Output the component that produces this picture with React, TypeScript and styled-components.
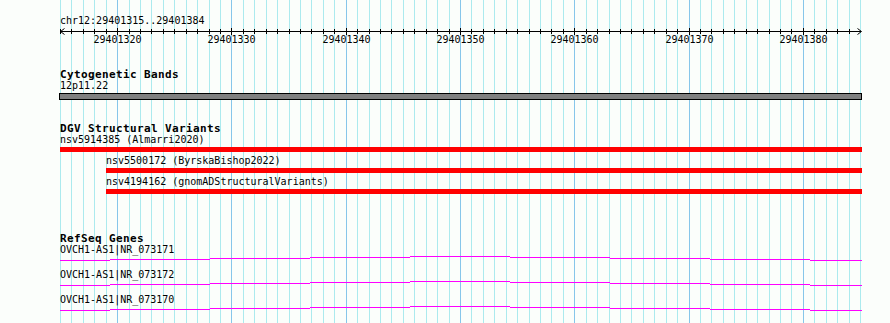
import React from 'react';
import styled, { createGlobalStyle } from 'styled-components';

// genome browser track panel: chr12:29401315..29401384
const START = 29401315;
const END = 29401385;
const X0 = 60;
const SPAN = 800;
const bpX = (bp: number) => Math.round(X0 + ((bp - START) * SPAN) / (END - START));

const GlobalStyle = createGlobalStyle`
    html, body {
        margin: 0;
        padding: 0;
        background: #fbfefb;
    }
`;

const Canvas = styled.div`
    position: relative;
    width: 890px;
    height: 323px;
    overflow: hidden;
    background: #fbfefb;
    color: #000;
    font-family: "DejaVu Sans Mono", "Liberation Mono", monospace;
`;

const GridLayer = styled.svg`
    position: absolute;
    left: 0;
    top: 0;
`;

const Tracks = styled.div`
    position: relative;
    display: flex;
    flex-direction: column;
`;

const RulerLabel = styled.div`
    margin: 15px 0 0 60px;
    font-size: 10px;
    line-height: 11px;
    white-space: nowrap;
`;

const RulerSvg = styled.svg`
    display: block;
`;

const Track = styled.section<{ $gap: number }>`
    display: flex;
    flex-direction: column;
    margin-top: ${p => p.$gap}px;
`;

const TrackTitle = styled.div`
    margin-left: 60px;
    font-size: 11px;
    font-weight: bold;
    letter-spacing: 0.38px;
    line-height: 11px;
    white-space: nowrap;
`;

const FeatureLabel = styled.div<{ $left: number; $gap?: number }>`
    margin-left: ${p => p.$left}px;
    margin-top: ${p => p.$gap ?? 0}px;
    font-size: 10px;
    line-height: 11px;
    white-space: nowrap;
`;

const BandBar = styled.div`
    box-sizing: border-box;
    margin: 2px 0 0 59px;
    width: 803px;
    height: 7px;
    background: #808080;
    border: 1px solid #000;
`;

const VariantBar = styled.div<{ $left: number }>`
    margin: 2px 0 0 ${p => p.$left}px;
    width: ${p => 862 - p.$left}px;
    height: 5px;
    background: #ff0000;
`;

const GeneGlyph = styled.svg`
    display: block;
    margin-left: 60px;
`;

const Grid = () => {
    const lines = [];
    for (let i = 0; i <= END - START; i++) {
        const x = bpX(START + i) + 0.5;
        const major = (START + i) % 10 === 0;
        lines.push(
            <line key={i} x1={x} x2={x} y1={0} y2={323}
                stroke={major ? '#86c6ea' : '#abeaee'} strokeWidth={1} />
        );
    }
    return (
        <GridLayer width={890} height={323} shapeRendering="crispEdges">
            {lines}
        </GridLayer>
    );
};

const Ruler = () => {
    const ticks = [];
    const labels = [];
    for (let bp = START; bp < END; bp++) {
        const x = bpX(bp) + 0.5;
        const major = bp % 10 === 0;
        ticks.push(
            <line key={bp} x1={x} x2={x} y1={major ? 28 : 29} y2={major ? 35 : 34}
                stroke="#000" strokeWidth={1} />
        );
        if (major) {
            labels.push(
                <text key={bp} x={x} y={43} textAnchor="middle" fontSize={10}
                    fontFamily='"DejaVu Sans Mono", "Liberation Mono", monospace'>
                    {bp}
                </text>
            );
        }
    }
    return (
        <RulerSvg width={890} height={24} viewBox="0 26 890 24">
            <g shapeRendering="crispEdges">
                <line x1={60} x2={861} y1={31.5} y2={31.5} stroke="#000" />
                {ticks}
            </g>
            <polyline points="64.5,28.5 60.5,31.5 64.5,34.5" fill="none" stroke="#000" />
            <polyline points="857.5,28.5 861.5,31.5 857.5,34.5" fill="none" stroke="#000" />
            {labels}
        </RulerSvg>
    );
};

// intron line spanning past both edges, shallow hat
const intronSteps: [number, number, number][] = [
    [60, 110, 5], [110, 210, 4], [210, 310, 3], [310, 410, 2], [410, 510, 1],
    [510, 610, 2], [610, 710, 3], [710, 810, 4], [810, 862, 5],
];

const Gene = ({ name }: { name: string }) => (
    <>
        <FeatureLabel $left={60}>{name}</FeatureLabel>
        <GeneGlyph width={802} height={14} shapeRendering="crispEdges">
            {intronSteps.map(([a, b, y]) => (
                <line key={a} x1={a - 60} x2={b - 60} y1={y + 0.5} y2={y + 0.5}
                    stroke="#ff00ff" strokeWidth={1} />
            ))}
        </GeneGlyph>
    </>
);

const variants = [
    { id: 'nsv5914385 (Almarri2020)', start: 29401315 },
    { id: 'nsv5500172 (ByrskaBishop2022)', start: 29401319 },
    { id: 'nsv4194162 (gnomADStructuralVariants)', start: 29401319 },
];

const genes = ['OVCH1-AS1|NR_073171', 'OVCH1-AS1|NR_073172', 'OVCH1-AS1|NR_073170'];

export default function App() {
    return (
        <>
            <GlobalStyle />
            <Canvas>
                <Grid />
                <Tracks>
                    <RulerLabel>chr12:29401315..29401384</RulerLabel>
                    <Ruler />

                    <Track $gap={19}>
                        <TrackTitle>Cytogenetic Bands</TrackTitle>
                        <FeatureLabel $left={60}>12p11.22</FeatureLabel>
                        <BandBar />
                    </Track>

                    <Track $gap={23}>
                        <TrackTitle>DGV Structural Variants</TrackTitle>
                        {variants.map((v, i) => (
                            <React.Fragment key={v.id}>
                                <FeatureLabel $left={bpX(v.start)} $gap={i === 0 ? 0 : 3}>{v.id}</FeatureLabel>
                                <VariantBar $left={bpX(v.start)} />
                            </React.Fragment>
                        ))}
                    </Track>

                    <Track $gap={39}>
                        <TrackTitle>RefSeq Genes</TrackTitle>
                        {genes.map(g => <Gene key={g} name={g} />)}
                    </Track>
                </Tracks>
            </Canvas>
        </>
    );
}
